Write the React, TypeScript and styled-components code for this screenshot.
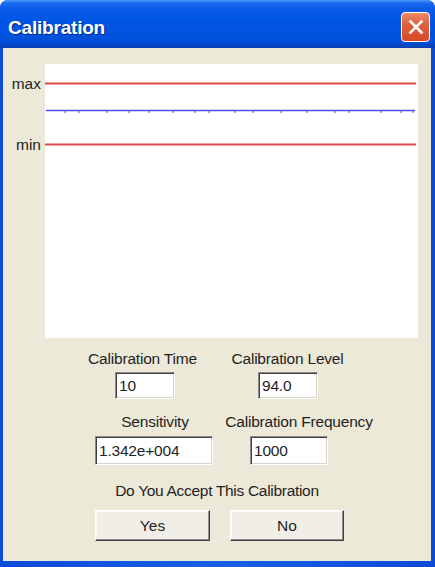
import React from "react";
import styled, { createGlobalStyle } from "styled-components";

const GlobalStyle = createGlobalStyle`
  html, body {
    margin: 0;
    padding: 0;
    background: #ffffff;
  }
  body {
    font-family: "Liberation Sans", Arial, sans-serif;
  }
`;

const Window = styled.div`
  width: 435px;
  height: 567px;
  display: flex;
  flex-direction: column;
  background: linear-gradient(to right, #0B4BD6, #1A5FE6 50%, #0B4BD6);
  border-radius: 8px 8px 0 0;
  overflow: hidden;
  box-sizing: border-box;
`;

const TitleBar = styled.div`
  height: 48px;
  flex: none;
  display: flex;
  align-items: center;
  justify-content: space-between;
  padding: 6px 5px 0 8px;
  box-sizing: border-box;
  background: linear-gradient(
    to bottom,
    #4C9BFF 0%,
    #1A6CF2 6%,
    #0A5BE8 18%,
    #0055E3 45%,
    #0052DE 75%,
    #004CD4 90%,
    #0A3FB0 100%
  );
`;

const Title = styled.span`
  color: #ffffff;
  font-weight: bold;
  font-size: 19px;
  letter-spacing: -0.2px;
  text-shadow: 1px 1px 1px #0A2A80;
  margin-top: 2px;
`;

const CloseButton = styled.div`
  width: 29px;
  height: 30px;
  box-sizing: border-box;
  border: 1px solid #ffffff;
  border-radius: 4px;
  background: linear-gradient(to bottom, #EE8A6A 0%, #E2603C 40%, #D34A26 100%);
  display: flex;
  align-items: center;
  justify-content: center;
`;

const Client = styled.div`
  flex: 1;
  margin: 0 4px 6px 3px;
  background: #ECE9D8;
  padding-top: 16px;
  display: flex;
  flex-direction: column;
  color: #1f1f1f;
  font-size: 15.5px;
`;

const ChartSvg = styled.svg`
  display: block;
  flex: none;
`;

const FieldRow = styled.div<{ $top: number }>`
  display: grid;
  grid-template-columns: 210px 1fr;
  margin-top: ${(p) => p.$top}px;
`;

const Field = styled.div<{ $gap: number }>`
  display: flex;
  flex-direction: column;
  gap: ${(p) => p.$gap}px;
`;

const FieldLabel = styled.div<{ $center: number }>`
  width: 200px;
  margin-left: ${(p) => p.$center - 100}px;
  text-align: center;
  line-height: 18px;
  height: 18px;
  white-space: nowrap;
  letter-spacing: -0.2px;
`;

const TextBox = styled.div<{ $left: number; $width: number; $height: number }>`
  margin-left: ${(p) => p.$left}px;
  width: ${(p) => p.$width}px;
  height: ${(p) => p.$height}px;
  box-sizing: border-box;
  background: #ffffff;
  border-top: 1px solid #8C8C8C;
  border-left: 1px solid #8C8C8C;
  border-bottom: 1px solid #FFFFFF;
  border-right: 1px solid #FFFFFF;
  box-shadow: inset 1px 1px 0 #404040, inset -1px -1px 0 #D8D5C8;
  padding-left: 3px;
  display: flex;
  align-items: center;
  line-height: 1;
  letter-spacing: -0.2px;
`;

const Question = styled.div`
  margin-top: 17px;
  text-align: center;
  line-height: 18px;
  letter-spacing: -0.3px;
`;

const ButtonRow = styled.div`
  display: flex;
  gap: 20px;
  padding-left: 92px;
  margin-top: 10px;
`;

const Button = styled.div<{ $width: number }>`
  width: ${(p) => p.$width}px;
  height: 31px;
  box-sizing: border-box;
  background: #F0EEE6;
  border-top: 1px solid #FFFFFF;
  border-left: 1px solid #FFFFFF;
  border-bottom: 1px solid #404040;
  border-right: 1px solid #404040;
  box-shadow: inset -1px -1px 0 #8E8E8E, inset 1px 1px 0 #F8F8F4;
  display: flex;
  align-items: center;
  justify-content: center;
`;

// tick positions (plot x) where the live level trace dips by a pixel
const traceTicks = [20, 34, 62, 84, 104, 128, 150, 164, 190, 208, 236, 262, 290, 304, 336, 356, 368];

function LevelChart() {
  const plotLeft = 42;
  const plotRight = 415;
  const maxY = 19.5;
  const minY = 80.5;
  const traceY = 46.5;

  return (
    <ChartSvg width={428} height={274} viewBox="0 0 428 274">
      <rect x={plotLeft} y={0} width={plotRight - plotLeft} height={274} fill="#ffffff" />
      <line x1={plotLeft} x2={plotRight - 2} y1={maxY} y2={maxY} stroke="#E04848" strokeWidth={2} />
      <line x1={plotLeft} x2={plotRight - 2} y1={minY} y2={minY} stroke="#E04848" strokeWidth={2} />
      <line x1={plotLeft + 1} x2={plotRight - 3} y1={traceY} y2={traceY} stroke="#4B4BE0" strokeWidth={1.6} />
      {traceTicks.map((t) => (
        <line
          key={t}
          x1={plotLeft + t}
          x2={plotLeft + t}
          y1={traceY}
          y2={traceY + 2.5}
          stroke="#6A6AE6"
          strokeWidth={1.2}
        />
      ))}
      <text x={38} y={maxY + 5} textAnchor="end" fontSize={15.5} fill="#1f1f1f" fontFamily="Liberation Sans, Arial, sans-serif">
        max
      </text>
      <text x={38} y={minY + 5} textAnchor="end" fontSize={15.5} fill="#1f1f1f" fontFamily="Liberation Sans, Arial, sans-serif">
        min
      </text>
    </ChartSvg>
  );
}

export default function App() {
  return (
    <>
      <GlobalStyle />
      <Window>
        <TitleBar>
          <Title>Calibration</Title>
          <CloseButton>
            <svg width="16" height="16" viewBox="0 0 16 16">
              <path d="M2.5 2.5 L13.5 13.5 M13.5 2.5 L2.5 13.5" stroke="#ffffff" strokeWidth="2.6" strokeLinecap="square" />
            </svg>
          </CloseButton>
        </TitleBar>
        <Client>
          <LevelChart />
          <FieldRow $top={12}>
            <Field $gap={4}>
              <FieldLabel $center={139.5}>Calibration Time</FieldLabel>
              <TextBox $left={112} $width={60} $height={27}>10</TextBox>
            </Field>
            <Field $gap={4}>
              <FieldLabel $center={74.5}>Calibration Level</FieldLabel>
              <TextBox $left={45} $width={60} $height={27}>94.0</TextBox>
            </Field>
          </FieldRow>
          <FieldRow $top={14}>
            <Field $gap={5}>
              <FieldLabel $center={152}>Sensitivity</FieldLabel>
              <TextBox $left={92} $width={118} $height={29}>1.342e+004</TextBox>
            </Field>
            <Field $gap={5}>
              <FieldLabel $center={86}>Calibration Frequency</FieldLabel>
              <TextBox $left={37} $width={78} $height={29}>1000</TextBox>
            </Field>
          </FieldRow>
          <Question>Do You Accept This Calibration</Question>
          <ButtonRow>
            <Button $width={115}>Yes</Button>
            <Button $width={114}>No</Button>
          </ButtonRow>
        </Client>
      </Window>
    </>
  );
}
